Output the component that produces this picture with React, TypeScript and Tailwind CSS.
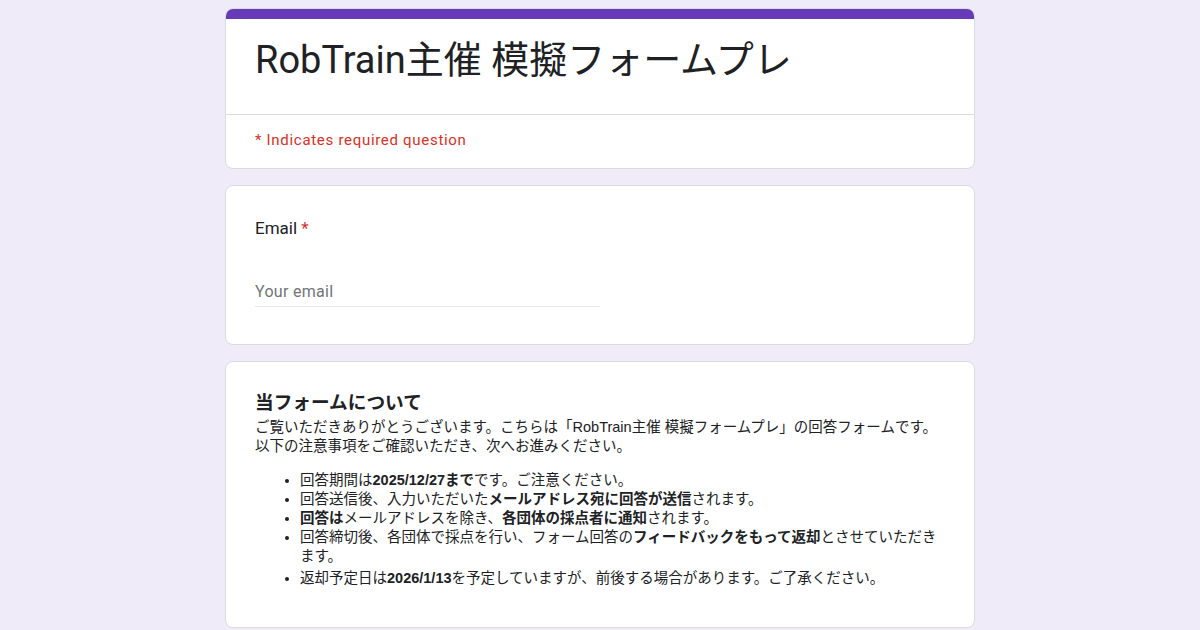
import React from "react";

function Card({ children, className = "" }: { children: React.ReactNode; className?: string }) {
  return (
    <div className={`bg-white border border-[#dadce0] rounded-lg overflow-hidden ${className}`}>
      {children}
    </div>
  );
}

export default function App() {
  return (
    <div className="min-h-screen bg-[#f0ebf8] text-[#202124] pt-2">
      <div className="w-[750px] ml-[225px] flex flex-col gap-[16px]">
        {/* title card */}
        <Card>
          <div className="h-[10px] bg-[#673ab7]" />
          <div className="px-[29px] pt-[17px] pb-[30px]">
            <h1 className="text-[38px] leading-[48px] font-['Roboto','Noto_Sans_CJK_JP',sans-serif] font-normal">
              RobTrain主催 模擬フォームプレ
            </h1>
          </div>
          <div className="border-t border-[#dadce0] px-[29px] pt-[15px] pb-[18px]">
            <p className="text-[15px] leading-5 text-[#d93025] font-['Roboto',sans-serif] tracking-[0.7px]">
              * Indicates required question
            </p>
          </div>
        </Card>

        {/* email */}
        <Card className="px-[29px] pt-[30px] pb-[37px]">
          <div className="text-[17px] leading-6 font-['Roboto',sans-serif]">
            Email <span className="text-[#d93025]">*</span>
          </div>
          <div className="mt-[39px] w-[345px] border-b border-[#e8e8ea] pb-[2px]">
            <span className="text-[16px] leading-6 text-[#70757a] font-['Roboto',sans-serif] tracking-[0.3px]">
              Your email
            </span>
          </div>
        </Card>

        {/* about */}
        <Card className="px-[29px] pt-[29px] pb-[39px] font-['Liberation_Sans','Noto_Sans_CJK_JP',sans-serif]">
          <h2 className="text-[18.67px] leading-6 font-bold">当フォームについて</h2>
          <p className="mt-[3px] text-[14.5px] leading-[19px]">
            ご覧いただきありがとうございます。こちらは「RobTrain主催 模擬フォームプレ」の回答フォームです。
            <br />
            以下の注意事項をご確認いただき、次へお進みください。
          </p>
          <ul className="mt-[15px] pl-[45px] list-disc text-[14.5px] leading-[19px] flex flex-col">
            <li>
              回答期間は<b>2025/12/27まで</b>です。ご注意ください。
            </li>
            <li>
              回答送信後、入力いただいた<b>メールアドレス宛に回答が送信</b>されます。
            </li>
            <li>
              <b>回答は</b>メールアドレスを除き、<b>各団体の採点者に通知</b>されます。
            </li>
            <li className="mb-[3px]">
              回答締切後、各団体で採点を行い、フォーム回答の<b>フィードバックをもって返却</b>とさせていただきます。
            </li>
            <li>
              返却予定日は<b>2026/1/13</b>を予定していますが、前後する場合があります。ご了承ください。
            </li>
          </ul>
        </Card>
      </div>
    </div>
  );
}
